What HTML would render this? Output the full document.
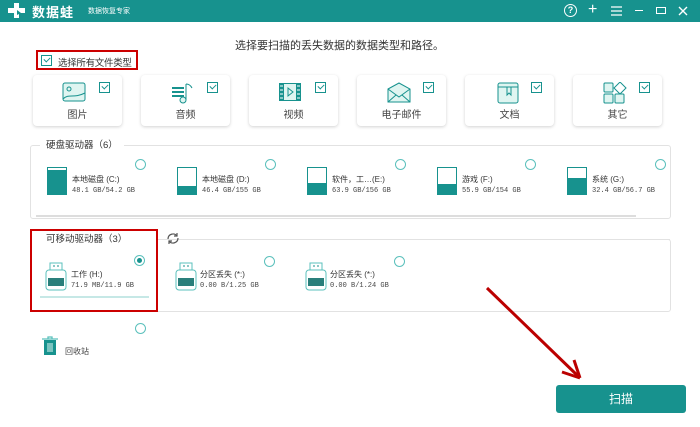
<!DOCTYPE html>
<html><head><meta charset="utf-8"><style>
*{margin:0;padding:0;box-sizing:border-box}
body{width:700px;height:427px;background:#fff;position:relative;overflow:hidden;font-family:"Liberation Sans","Noto Sans CJK SC",sans-serif;color:#333}
.a{position:absolute}
.hdr{left:0;top:0;width:700px;height:22px;background:#17928e}
.card{background:#fff;border-radius:4px;box-shadow:0 1px 3px rgba(0,0,0,.18);width:89px;height:51px;top:75px}
.card .lb{position:absolute;top:31px;left:0;width:100%;text-align:center;font-size:10px;color:#444}
.cb{width:11px;height:11px;border:1px solid #17928e;background:#fff}
.cb:after{content:"";position:absolute;left:2px;top:1px;width:5px;height:3px;border-left:1.5px solid #17928e;border-bottom:1.5px solid #17928e;transform:rotate(-45deg)}
.rd{width:11px;height:11px;border:1.3px solid #5bc0bc;border-radius:50%}
.dn{font-size:8px;color:#333}
.ds{font-size:7px;color:#444;font-family:"Liberation Mono","Noto Sans CJK SC",monospace}
.hd{width:20px;height:28px;border:1px solid #17928e;background:#fff}
.hd i{position:absolute;left:0;bottom:0;width:100%;background:#17928e}
.box{border:1px solid #e2e2e2;border-radius:3px}
.leg{font-size:9.5px;color:#333;background:#fff;padding:0 6px}
</style></head><body>
<div class="a hdr"></div>
<svg class="a" style="left:8px;top:3px" width="18" height="16" viewBox="0 0 18 16"><path d="M6 0h5v5h6v5h-6v5H6v-5H0V5h6z" fill="#fff"/><path d="M9 7l4 3-4 2z" fill="#17928e"/></svg>
<div class="a" style="left:32px;top:2px;font-size:13px;font-weight:bold;color:#fff;letter-spacing:1px">数据蛙</div>
<div class="a" style="left:88px;top:6px;font-size:7px;color:#fff">数据恢复专家</div>
<div class="a" style="left:564px;top:4px;width:13px;height:13px;border:1.5px solid #fff;border-radius:50%;color:#fff;font-size:9px;font-weight:bold;text-align:center;line-height:10px">?</div>
<div class="a" style="left:588px;top:1px;color:#fff;font-size:16px;line-height:18px">+</div>
<svg class="a" style="left:611px;top:6px" width="11" height="10"><path d="M0 1h11M0 5h11M0 9h11" stroke="#fff" stroke-width="1.3"/></svg>
<div class="a" style="left:635px;top:10px;width:8px;height:1.4px;background:#fff"></div>
<div class="a" style="left:656px;top:7px;width:10px;height:7px;border:1.4px solid #fff"></div>
<svg class="a" style="left:678px;top:6px" width="10" height="10"><path d="M1 1l8 8M9 1l-8 8" stroke="#fff" stroke-width="1.4"/></svg>

<div class="a" style="left:235px;top:37px;font-size:11px;color:#333">选择要扫描的丢失数据的数据类型和路径。</div>
<div class="a" style="left:36px;top:50px;width:102px;height:20px;border:2px solid #c00"></div>
<div class="a cb" style="left:41px;top:55px"></div>
<div class="a" style="left:58px;top:55px;font-size:9.5px;color:#333;letter-spacing:-0.3px">选择所有文件类型</div>

<div class="a card" style="left:33px"><svg class="a" style="left:29px;top:7px" width="24" height="20"><rect x="1" y="1" width="22" height="18" rx="2" fill="#dff5f1" stroke="#17928e"/><circle cx="7" cy="7" r="2" fill="none" stroke="#17928e"/><path d="M1 17c6-6 10 0 22-6" fill="none" stroke="#17928e"/></svg><div class="a cb" style="left:66px;top:7px"></div><div class="lb">图片</div></div>
<div class="a card" style="left:141px"><svg class="a" style="left:29px;top:7px" width="24" height="22"><path d="M2 6h12M2 10h12M2 14h12" stroke="#17928e" stroke-width="2"/><path d="M16 2v16" stroke="#17928e"/><path d="M16 2c3 0 5 2 6 4" stroke="#17928e" fill="none"/><circle cx="13" cy="18" r="3" fill="#dff5f1" stroke="#17928e"/></svg><div class="a cb" style="left:66px;top:7px"></div><div class="lb">音频</div></div>
<div class="a card" style="left:249px"><svg class="a" style="left:29px;top:7px" width="24" height="20"><rect x="1" y="1" width="22" height="18" fill="#17928e"/><rect x="6" y="2" width="12" height="16" fill="#dff5f1"/><path d="M10 6v8l5-4z" fill="none" stroke="#17928e"/><path d="M2 4h3M2 8h3M2 12h3M2 16h3M19 4h3M19 8h3M19 12h3M19 16h3" stroke="#fff"/></svg><div class="a cb" style="left:66px;top:7px"></div><div class="lb">视频</div></div>
<div class="a card" style="left:357px"><svg class="a" style="left:30px;top:7px" width="24" height="21"><path d="M1 7l11-6 11 6v13H1z" fill="#dff5f1" stroke="#17928e"/><path d="M1 7l11 8 11-8M1 20l8-7M23 20l-8-7" fill="none" stroke="#17928e"/></svg><div class="a cb" style="left:66px;top:7px"></div><div class="lb">电子邮件</div></div>
<div class="a card" style="left:465px"><svg class="a" style="left:32px;top:7px" width="22" height="22"><rect x="1" y="1" width="20" height="20" rx="2" fill="#dff5f1" stroke="#17928e"/><path d="M1 5h20M10 5v8l2-2 2 2V5" fill="none" stroke="#17928e"/></svg><div class="a cb" style="left:66px;top:7px"></div><div class="lb">文档</div></div>
<div class="a card" style="left:573px"><svg class="a" style="left:30px;top:7px" width="24" height="22"><rect x="1" y="1" width="9" height="9" rx="1" fill="#dff5f1" stroke="#17928e"/><path d="M17 0l6 6-6 6-6-6z" fill="#fff" stroke="#17928e"/><rect x="1" y="12" width="9" height="9" rx="1" fill="#dff5f1" stroke="#17928e"/><rect x="12" y="12" width="9" height="9" rx="1" fill="#dff5f1" stroke="#17928e"/></svg><div class="a cb" style="left:66px;top:7px"></div><div class="lb">其它</div></div>

<div class="a box" style="left:30px;top:145px;width:641px;height:74px"></div>
<div class="a" style="left:36px;top:215px;width:600px;height:2px;background:#ddd"></div>
<div class="a leg" style="left:40px;top:137px">硬盘驱动器（6）</div>

<div class="a hd" style="left:47px;top:167px"><i style="height:24px"></i></div>
<div class="a dn" style="left:72px;top:174px">本地磁盘 (C:)</div><div class="a ds" style="left:72px;top:187px">48.1 GB/54.2 GB</div><div class="a rd" style="left:135px;top:159px"></div>
<div class="a hd" style="left:177px;top:167px"><i style="height:8px"></i></div>
<div class="a dn" style="left:202px;top:174px">本地磁盘 (D:)</div><div class="a ds" style="left:202px;top:187px">46.4 GB/155 GB</div><div class="a rd" style="left:265px;top:159px"></div>
<div class="a hd" style="left:307px;top:167px"><i style="height:11px"></i></div>
<div class="a dn" style="left:332px;top:174px">软件，工…(E:)</div><div class="a ds" style="left:332px;top:187px">63.9 GB/156 GB</div><div class="a rd" style="left:395px;top:159px"></div>
<div class="a hd" style="left:437px;top:167px"><i style="height:10px"></i></div>
<div class="a dn" style="left:462px;top:174px">游戏 (F:)</div><div class="a ds" style="left:462px;top:187px">55.9 GB/154 GB</div><div class="a rd" style="left:525px;top:159px"></div>
<div class="a hd" style="left:567px;top:167px"><i style="height:16px"></i></div>
<div class="a dn" style="left:592px;top:174px">系统 (G:)</div><div class="a ds" style="left:592px;top:187px">32.4 GB/56.7 GB</div><div class="a rd" style="left:655px;top:159px"></div>

<div class="a box" style="left:30px;top:239px;width:641px;height:73px"></div>
<div class="a" style="left:30px;top:229px;width:128px;height:83px;border:2px solid #c00;background:#fff"></div>
<div class="a leg" style="left:40px;top:231px">可移动驱动器（3）</div>
<svg class="a" style="left:166px;top:232px" width="14" height="13" viewBox="0 0 14 13"><path d="M2 7a5 5 0 0 1 9-3M12 6a5 5 0 0 1-9 3" fill="none" stroke="#555" stroke-width="1.2"/><path d="M11 1v3h-3M3 12V9h3" fill="none" stroke="#555" stroke-width="1.2"/></svg>
<div class="a" style="left:180px;top:239px;width:490px;height:1px;background:#e2e2e2"></div>

<svg class="a" style="left:45px;top:262px" width="22" height="30"><rect x="5" y="1" width="12" height="7" fill="#fff" stroke="#5bc0bc"/><path d="M8 4h2M12 4h2" stroke="#17928e"/><rect x="1" y="8" width="20" height="20" rx="3" fill="#fff" stroke="#5bc0bc"/><rect x="3" y="16" width="16" height="8" fill="#2a7f7b"/></svg>
<div class="a dn" style="left:71px;top:269px">工作 (H:)</div><div class="a ds" style="left:71px;top:282px">71.9 MB/11.9 GB</div>
<div class="a" style="left:134px;top:255px;width:11px;height:11px;border:1.3px solid #5bc0bc;border-radius:50%"><div class="a" style="left:2px;top:2px;width:5px;height:5px;border-radius:50%;background:#17928e"></div></div>
<div class="a" style="left:40px;top:296px;width:109px;height:2px;background:#c6e8e6"></div>

<svg class="a" style="left:175px;top:262px" width="22" height="30"><rect x="5" y="1" width="12" height="7" fill="#fff" stroke="#5bc0bc"/><path d="M8 4h2M12 4h2" stroke="#17928e"/><rect x="1" y="8" width="20" height="20" rx="3" fill="#fff" stroke="#5bc0bc"/><rect x="3" y="16" width="16" height="8" fill="#2a7f7b"/></svg>
<div class="a dn" style="left:200px;top:269px">分区丢失 (*:)</div><div class="a ds" style="left:200px;top:282px">0.00  B/1.25 GB</div><div class="a rd" style="left:264px;top:256px"></div>
<svg class="a" style="left:305px;top:262px" width="22" height="30"><rect x="5" y="1" width="12" height="7" fill="#fff" stroke="#5bc0bc"/><path d="M8 4h2M12 4h2" stroke="#17928e"/><rect x="1" y="8" width="20" height="20" rx="3" fill="#fff" stroke="#5bc0bc"/><rect x="3" y="16" width="16" height="8" fill="#2a7f7b"/></svg>
<div class="a dn" style="left:330px;top:269px">分区丢失 (*:)</div><div class="a ds" style="left:330px;top:282px">0.00  B/1.24 GB</div><div class="a rd" style="left:394px;top:256px"></div>

<div class="a rd" style="left:135px;top:323px"></div>
<svg class="a" style="left:41px;top:336px" width="18" height="20"><path d="M1 3h16M7 3V1h4v2" stroke="#5bc0bc" fill="none" stroke-width="1.3"/><rect x="3" y="4" width="12" height="15" fill="#17928e"/><path d="M7 7v9M9 7v9M11 7v9" stroke="#dff5f1"/></svg>
<div class="a" style="left:65px;top:346px;font-size:8px;color:#444">回收站</div>

<svg class="a" style="left:480px;top:282px" width="110" height="105"><path d="M7 6L98 94" stroke="#b00" stroke-width="3"/><path d="M100 96L82 90M100 96L94 78" stroke="#b00" stroke-width="3"/></svg>
<div class="a" style="left:556px;top:385px;width:130px;height:28px;background:#17928e;border-radius:3px;color:#fff;font-size:12px;text-align:center;line-height:28px">扫描</div>
</body></html>
